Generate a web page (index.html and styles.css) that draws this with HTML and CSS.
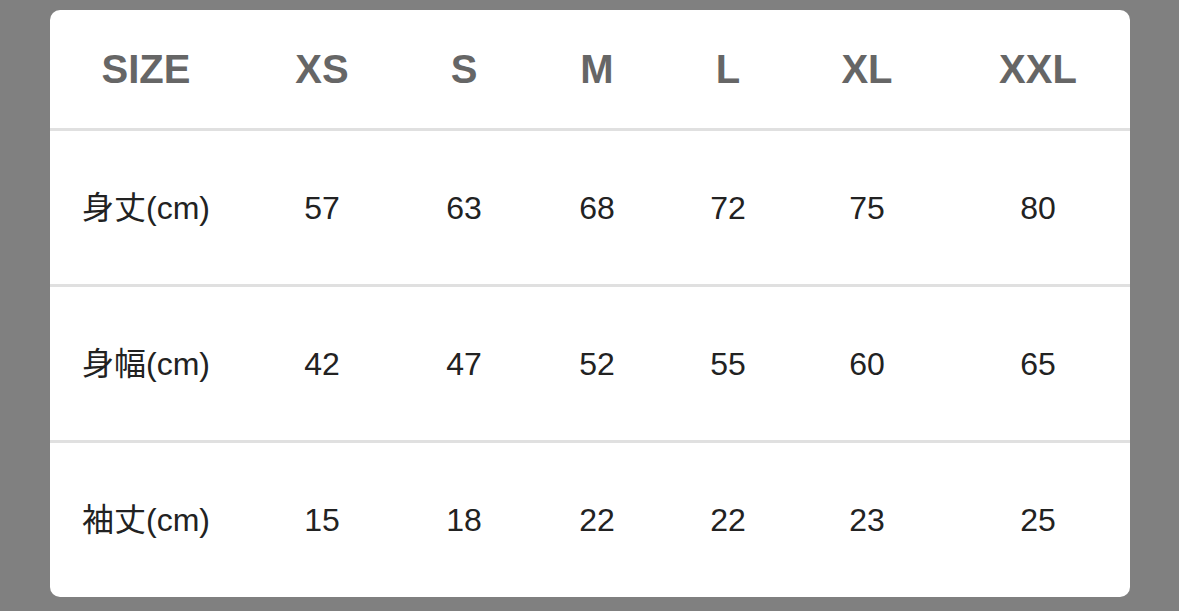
FILE: index.html
```html
<!DOCTYPE html>
<html lang="ja">
<head>
<meta charset="utf-8">
<title>Size chart</title>
<link rel="stylesheet" href="styles.css">
</head>
<body>
<div class="card">
  <div class="row head">
    <div class="cell">SIZE</div>
    <div class="cell">XS</div>
    <div class="cell">S</div>
    <div class="cell">M</div>
    <div class="cell">L</div>
    <div class="cell">XL</div>
    <div class="cell">XXL</div>
  </div>
  <div class="row body">
    <div class="cell">身丈(cm)</div>
    <div class="cell">57</div>
    <div class="cell">63</div>
    <div class="cell">68</div>
    <div class="cell">72</div>
    <div class="cell">75</div>
    <div class="cell">80</div>
  </div>
  <div class="row body">
    <div class="cell">身幅(cm)</div>
    <div class="cell">42</div>
    <div class="cell">47</div>
    <div class="cell">52</div>
    <div class="cell">55</div>
    <div class="cell">60</div>
    <div class="cell">65</div>
  </div>
  <div class="row body last">
    <div class="cell">袖丈(cm)</div>
    <div class="cell">15</div>
    <div class="cell">18</div>
    <div class="cell">22</div>
    <div class="cell">22</div>
    <div class="cell">23</div>
    <div class="cell">25</div>
  </div>
</div>
</body>
</html>
```
FILE: styles.css
```css
html, body {
  margin: 0;
  padding: 0;
  background: #808080;
}
body {
  padding: 10px 49px 0 50px;
  height: 611px;
  box-sizing: border-box;
  overflow: hidden;
}
.card {
  width: 1080px;
  height: 587px;
  background: #ffffff;
  border-radius: 10px;
  overflow: hidden;
}
.row {
  display: grid;
  grid-template-columns: 192px 160px 124px 142px 120px 158px 184px;
  align-items: center;
  border-bottom: 3px solid #e0e0e0;
}
.cell {
  text-align: center;
  white-space: nowrap;
}
.head {
  height: 118px;
  font-family: "Liberation Sans", Arial, sans-serif;
  font-weight: 700;
  font-size: 40px;
  line-height: 46px;
  color: #666666;
}
.body {
  height: 153px;
  font-family: "Liberation Sans", Arial, "Noto Sans CJK JP", sans-serif;
  font-size: 32px;
  line-height: 38px;
  color: #222222;
}
.last {
  border-bottom: none;
  height: 154px;
}
```
